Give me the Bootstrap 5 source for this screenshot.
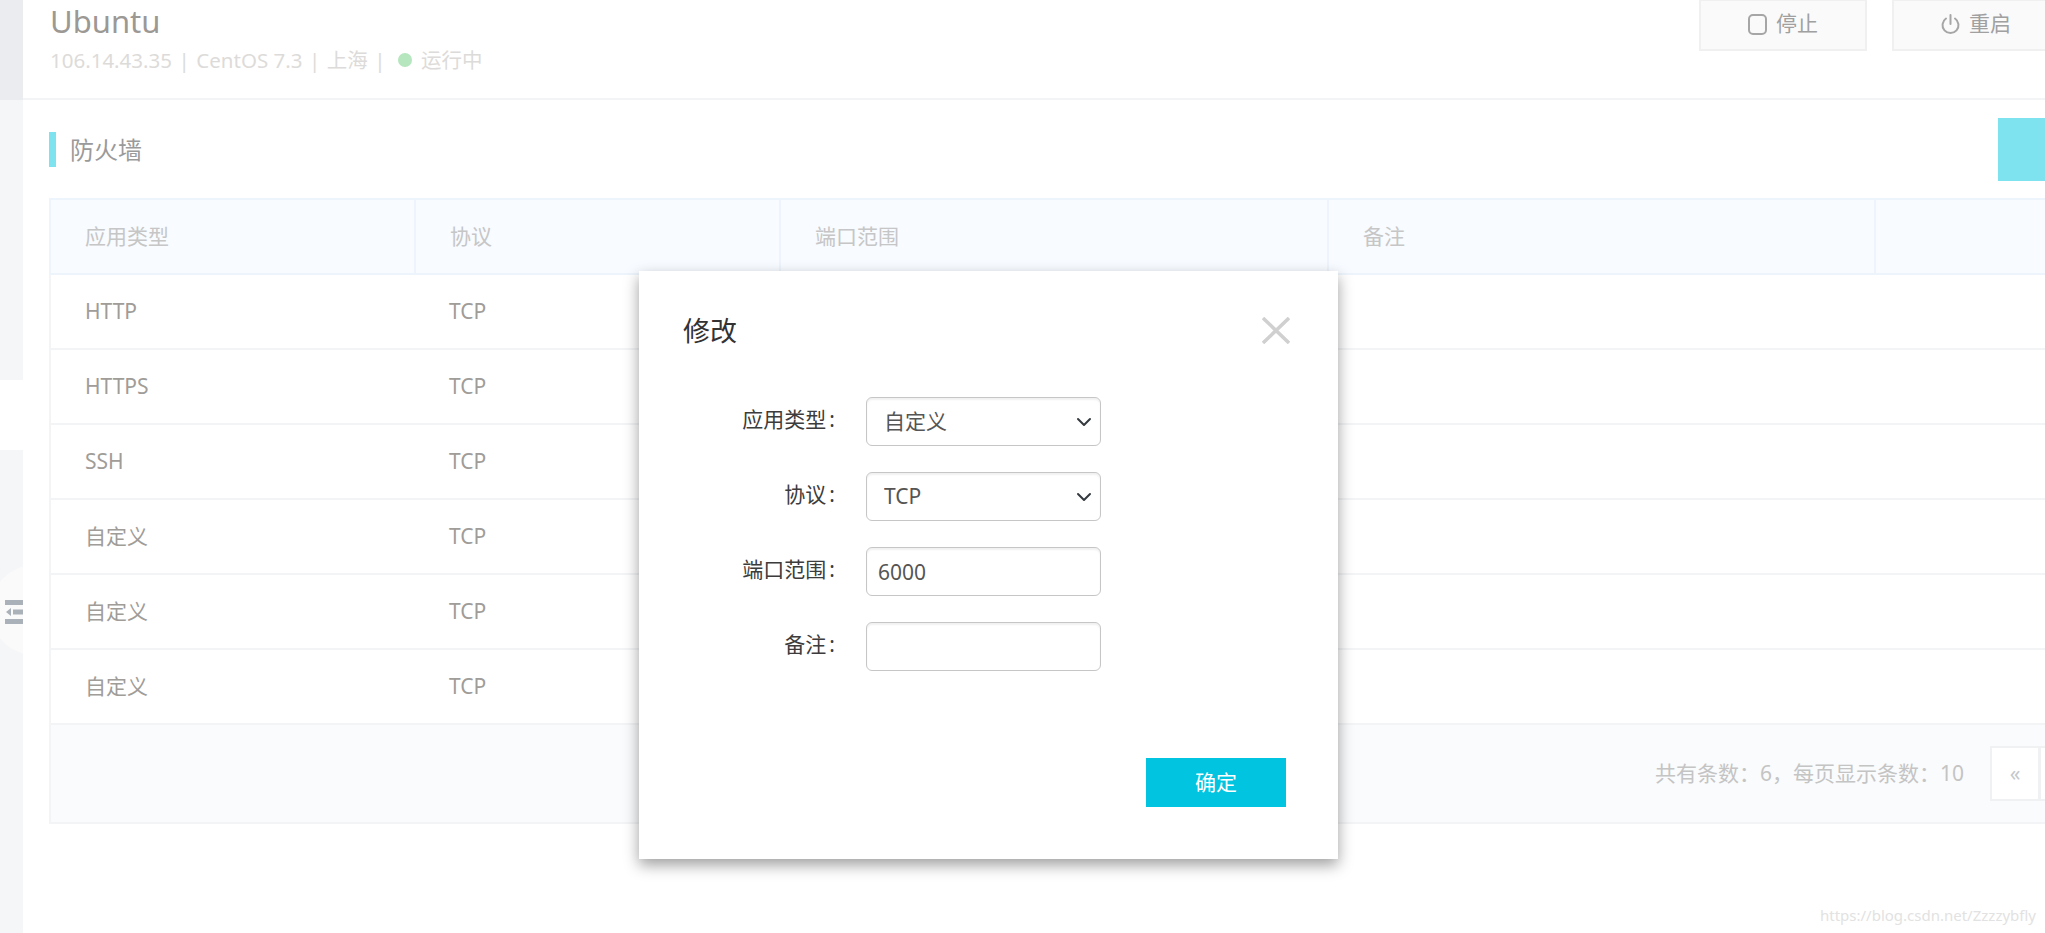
<!DOCTYPE html>
<html lang="zh-CN">
<head>
<meta charset="utf-8">
<title>防火墙</title>
<link href="https://cdn.jsdelivr.net/npm/bootstrap@5.3.0/dist/css/bootstrap.min.css" rel="stylesheet">
<style>
html,body{height:933px;overflow:hidden;background:#fff}
body{position:relative;font-family:"Noto Sans","Noto Sans CJK SC",sans-serif;font-size:21px;color:#9b9b9b}
.shell{width:2300px;height:933px}
.side{width:23px;flex:none;position:relative;overflow:hidden;background:#f5f6f8}
.side-top{height:100px;background:#ebecf0}
.side-gap{height:280px}
.side-white{height:70px;background:#fff}
.side-toggle{position:absolute;left:-10px;top:565px;width:90px;height:90px;border-radius:50%;background:#fafafb}
.side-icon{position:absolute;left:5px;top:600px;width:18px;height:24px}
.main-area{width:2126px;flex:none}
.top-head{height:100px;border-bottom:2px solid #f3f4f6;padding-left:27px}
.host-name{font-size:31px;line-height:42px;color:#9c9894}
.host-meta{font-size:20.5px;line-height:36px;color:#dddbd9;gap:6.5px}
.status-dot{width:14px;height:14px;border-radius:50%;background:#b5e6bd;margin:0 2.5px 0 6px}
.top-actions{gap:25px;position:absolute;top:-1px;left:1676px}
.power-btn{width:168px;height:52px;background:#fafafa;border:2px solid #f0f0f0;border-radius:0;color:#a0a0a0;font-size:21px;gap:9px;padding:0 0 2px}
.power-btn svg{width:19px;height:21px}
.sec-head{padding:18px 0 17px 26px}
.sec-title{border-left:7px solid #7fe3ef;height:35px;padding-left:14px;font-size:24px;line-height:35px;color:#9a9a9a}
.add-btn{width:120px;height:63px;background:#7fe3ef;border:0;border-radius:0;margin-right:31px}
.fw-wrap{margin-left:26px;width:2100px}
.fw-table{table-layout:fixed;width:2100px;margin:0;border-collapse:collapse;font-size:21px}
.fw-table>:not(caption)>*>*{height:75px;padding:0 34px;vertical-align:middle;color:#a09c98;background:#fff;border:0;border-bottom:2px solid #f3f4f6;box-shadow:none}
.fw-table>thead>tr>th{font-weight:400;color:#c6c6c6;background:#f8fbff;border-top:2px solid #eef4fb;border-bottom:2px solid #eef4fb;border-right:2px solid #eef4fb}
.fw-table>tbody>tr>td:first-child{border-left:2px solid #f3f4f6}
.fw-table>thead>tr>th:first-child{border-left:2px solid #eef4fb}
.c1,.c2{width:365px}.c3{width:548px}.c4{width:547px}.c5{width:275px}
.fw-foot{height:99px;background:#fafbfc;border-left:2px solid #f3f4f6;border-bottom:2px solid #f3f4f6;padding-right:60px;color:#c4c4c4;gap:27px}
.fw-pages{margin:0}
.fw-pages .page-link{width:50px;height:55px;display:flex;align-items:center;justify-content:center;padding:0;border:2px solid #f0f1f3;border-radius:0!important;color:#c4c8cc;font-size:21px;margin-left:-1px;background:#fff}
.dlg{position:absolute;left:639px;top:271px;width:699px;height:588px;background:#fff;border-radius:0;box-shadow:0 6px 14px rgba(0,0,0,.38);padding:40px 52px 52px 44px;color:#333}
.dlg-title{font-size:27px;line-height:40px;color:#333}
.dlg-close{width:28px;height:27px;margin:2px -4px 0 0;padding:0;background:none;border:0}
.dlg-form{margin-top:46px}
.dlg-row{height:49px;margin-bottom:26px;gap:31px}
.dlg-label{width:152px;text-align:right;font-size:21px;color:#3c3c3c;margin:-3px 0 0}
.dlg-colon{margin-left:3px}
.dlg-input{width:235px;height:49px;font-size:21px;color:#555;border:1px solid #c6c6c6;border-radius:6px;box-shadow:inset 0 2px 2px rgba(0,0,0,.06);padding:0 11px;font-family:inherit}
.dlg-select{padding-left:17px;background-position:right 6px center;background-size:20px 16px}
.dlg-ok{width:140px;height:49px;background:#00c4e0;border:0;border-radius:0;color:#fff;font-size:21px}
.mark-url{position:absolute;right:9px;top:904px;font-size:15px;line-height:22px;color:#e2e2e2}
</style>
</head>
<body>
<div class="shell d-flex">
  <aside class="side">
    <div class="side-top"></div>
    <div class="side-gap"></div>
    <div class="side-white"></div>
    <div class="side-toggle"></div>
    <svg class="side-icon" viewBox="0 0 18 24" fill="#aab1b9"><rect width="18" height="5"/><rect x="8" y="9.500" width="10" height="5"/><path d="M6 8v8l-5-4z"/><rect y="19" width="18" height="5"/></svg>
  </aside>
  <main class="main-area position-relative">
    <header class="top-head">
      <div class="host-name">Ubuntu</div>
      <div class="host-meta d-flex align-items-center">
        <span>106.14.43.35</span><span>|</span><span>CentOS 7.3</span><span>|</span><span>上海</span><span>|</span>
        <span class="status-dot"></span><span>运行中</span>
      </div>
    </header>
    <div class="top-actions d-flex">
      <button class="btn power-btn d-flex align-items-center justify-content-center" type="button">
        <svg viewBox="0 0 19 21" fill="none" stroke="#a6a6a6" stroke-width="2"><rect x="1" y="1" width="17" height="19" rx="4"/></svg>停止
      </button>
      <button class="btn power-btn d-flex align-items-center justify-content-center" type="button">
        <svg viewBox="0 0 19 21" fill="none" stroke="#a6a6a6" stroke-width="2" stroke-linecap="round"><path d="M9.500 1v9"/><path d="M5 4.500a8 8 0 1 0 9 0"/></svg>重启
      </button>
    </div>
    <section>
      <div class="sec-head d-flex align-items-center justify-content-between">
        <h2 class="sec-title m-0 fw-normal">防火墙</h2>
        <button class="btn add-btn" type="button" aria-label="添加"></button>
      </div>
      <div class="fw-wrap">
        <table class="table fw-table">
          <colgroup><col class="c1"><col class="c2"><col class="c3"><col class="c4"><col class="c5"></colgroup>
          <thead><tr><th>应用类型</th><th>协议</th><th>端口范围</th><th>备注</th><th></th></tr></thead>
          <tbody>
            <tr><td>HTTP</td><td>TCP</td><td></td><td></td><td></td></tr>
            <tr><td>HTTPS</td><td>TCP</td><td></td><td></td><td></td></tr>
            <tr><td>SSH</td><td>TCP</td><td></td><td></td><td></td></tr>
            <tr><td>自定义</td><td>TCP</td><td></td><td></td><td></td></tr>
            <tr><td>自定义</td><td>TCP</td><td></td><td></td><td></td></tr>
            <tr><td>自定义</td><td>TCP</td><td></td><td></td><td></td></tr>
          </tbody>
        </table>
        <div class="fw-foot d-flex align-items-center justify-content-end">
          <span>共有条数&#xFF1A;6&#xFF0C;每页显示条数&#xFF1A;10</span>
          <ul class="pagination fw-pages">
            <li class="page-item"><a class="page-link" href="#">«</a></li>
            <li class="page-item"><a class="page-link" href="#" aria-label="第1页"></a></li>
          </ul>
        </div>
      </div>
    </section>
  </main>
</div>

<div class="dlg d-flex flex-column" role="dialog">
  <div class="d-flex justify-content-between align-items-start">
    <div class="dlg-title">修改</div>
    <button class="dlg-close" type="button" aria-label="关闭">
      <svg viewBox="0 0 28 27" width="28" height="27" fill="none" stroke="#d0d0d0" stroke-width="3.500"><path d="M1 1l26 25M27 1L1 26"/></svg>
    </button>
  </div>
  <form class="dlg-form">
    <div class="dlg-row d-flex align-items-center">
      <label class="dlg-label">应用类型<span class="dlg-colon">:</span></label>
      <select class="form-select dlg-input dlg-select"><option>自定义</option></select>
    </div>
    <div class="dlg-row d-flex align-items-center">
      <label class="dlg-label">协议<span class="dlg-colon">:</span></label>
      <select class="form-select dlg-input dlg-select"><option>TCP</option></select>
    </div>
    <div class="dlg-row d-flex align-items-center">
      <label class="dlg-label">端口范围<span class="dlg-colon">:</span></label>
      <input class="form-control dlg-input" type="text" value="6000">
    </div>
    <div class="dlg-row d-flex align-items-center">
      <label class="dlg-label">备注<span class="dlg-colon">:</span></label>
      <input class="form-control dlg-input" type="text">
    </div>
  </form>
  <div class="mt-auto d-flex justify-content-end">
    <button class="btn dlg-ok" type="button">确定</button>
  </div>
</div>
<div class="mark-url">https://blog.csdn.net/Zzzzybfly</div>
<script src="https://cdn.jsdelivr.net/npm/bootstrap@5.3.0/dist/js/bootstrap.bundle.min.js"></script>
</body>
</html>
